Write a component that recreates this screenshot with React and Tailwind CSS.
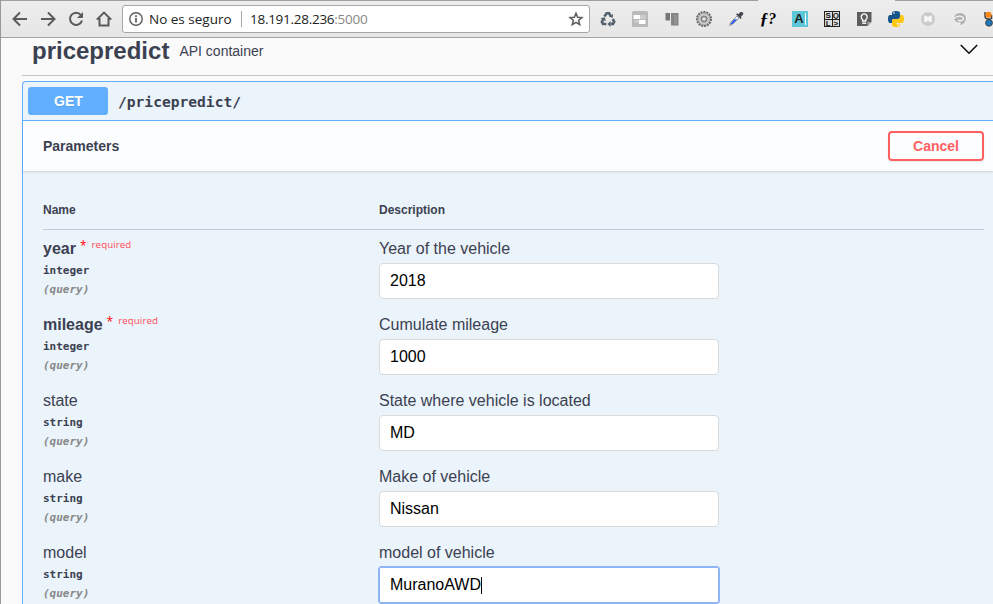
const sans = "font-['Liberation_Sans',Arial,sans-serif]";
const mono = "font-['DejaVu_Sans_Mono',monospace]";
const ui = "font-['Open_Sans','Noto_Sans',sans-serif]";

const params = [
  { name: "year", type: "integer", required: true, desc: "Year of the vehicle", value: "2018" },
  { name: "mileage", type: "integer", required: true, desc: "Cumulate mileage", value: "1000" },
  { name: "state", type: "string", desc: "State where vehicle is located", value: "MD" },
  { name: "make", type: "string", desc: "Make of vehicle", value: "Nissan" },
  { name: "model", type: "string", desc: "model of vehicle", value: "MuranoAWD", focused: true },
];

function NavIcon({ children }) {
  return (
    <svg width="16" height="16" viewBox="0 0 16 16" fill="none" stroke="#5a5a5a" strokeWidth="2" className="shrink-0">
      {children}
    </svg>
  );
}

function Ext({ children }) {
  return <svg width="16" height="16" viewBox="0 0 16 16" className="shrink-0">{children}</svg>;
}

function Toolbar() {
  return (
    <div className={`flex h-[38px] shrink-0 flex-col border-b border-[#a3a3a3] bg-linear-to-b from-[#ededed] to-[#e6e6e6] ${ui}`}>
      <div className="flex h-px shrink-0 justify-between">
        <span className="w-[757px] bg-[#a09fa1]" />
        <span className="w-[98px] bg-[#a09fa1]" />
      </div>
      <div className="flex h-9 items-center pl-[11px]">
        <div className="flex w-[110px] shrink-0 gap-3">
          <NavIcon><path d="M15 8H2M8 1.5L1.5 8L8 14.5" /></NavIcon>
          <NavIcon><path d="M1 8h13M8 1.5L14.5 8L8 14.5" /></NavIcon>
          <NavIcon>
            <path d="M12.9 4A6.1 6.1 0 1 0 14 9.5" />
            <path d="M15 1v6H9z" fill="#5a5a5a" stroke="none" />
          </NavIcon>
          <NavIcon><path d="M.8 8.6L8 1.6l7.2 7M3.5 7v7.5h9V7" /></NavIcon>
        </div>
        <div className="flex h-7 w-[468px] shrink-0 items-center rounded-[3px] border border-[#a6a6a6] bg-white pl-[6px] pr-[5px]">
          <svg width="14" height="14" viewBox="0 0 14 14" fill="none" stroke="#5a5a5a">
            <circle cx="7" cy="7" r="6.2" strokeWidth="1.4" />
            <path d="M7 6v4.5M7 3.3V5" strokeWidth="1.7" />
          </svg>
          <span className="ml-[6px] w-[86px] whitespace-nowrap text-[13.5px] leading-5 text-[#222]">No es seguro</span>
          <span className="ml-[6px] h-4 w-px bg-[#a8a8a8]" />
          <span className="ml-[8px] whitespace-nowrap text-[13.5px] leading-5 tracking-[-0.27px] text-[#222]">18.191.28.236<span className="text-[#888]">:5000</span></span>
          <svg className="ml-auto" width="16" height="16" viewBox="0 0 16 16" fill="none" stroke="#5a5a5a" strokeWidth="1.5">
            <path d="M8 2.3l1.6 4 4.3.3-3.3 2.8 1.1 4.2L8 11.3l-3.7 2.3 1.1-4.2-3.3-2.8 4.3-.3z" />
          </svg>
        </div>
        <div className="ml-[10px] flex shrink-0 gap-4">
          <Ext>
            <g fill="none" stroke="#54616d" strokeWidth="2.6">
              <path d="M4.4 5.5L6.6 2.3h2.5l1.5 2.5" />
              <path d="M12.7 8l1.5 2.7-1.2 2.2h-2.5" />
              <path d="M6.4 13H3l-1.1-2.3 1.3-2.3" />
            </g>
            <path d="M13.2 3l-.6 4-3.7-1.6zM10.5 10v6L7.5 13zM.5 7.2l4.3-.9 1 4z" fill="#54616d" />
          </Ext>
          <Ext>
            <rect width="16" height="16" rx="1.5" fill="#b9b9b9" />
            <path d="M1.5 4H8v4H1.5zM7 9h6.5v4H7z" fill="#fff" />
            <path d="M8 4h5.5v4H8zM2.500 9H7v3H2.5z" fill="#cdcdcd" />
          </Ext>
          <Ext>
            <path d="M1.5 2H6v7.5H1.5z" fill="#777" />
            <path d="M7 2h7.5v12.5H7z" fill="#858585" />
            <path d="M10 4h3v9h-3z" fill="#919191" />
          </Ext>
          <Ext>
            <circle cx="8" cy="8" r="7" fill="none" stroke="#666" strokeWidth="2" strokeDasharray="2 .93" />
            <circle cx="8" cy="8" r="6" fill="#cacaca" stroke="#888" strokeWidth=".8" />
            <circle cx="8" cy="8" r="3" fill="#aaa" stroke="#777" />
            <circle cx="8" cy="8" r="1.3" fill="#eee" />
          </Ext>
          <Ext>
            <path d="M1.5 14.5l1-3L9 5l2 2-6.3 6.3z" fill="#e8eefc" stroke="#888" strokeWidth=".8" />
            <path d="M2.4 13.6l.8-1.9L6.3 8.300h2.800l-4.600 4.600z" fill="#2855ea" />
            <path d="M8 3.3l4.7 4.6 1-1-1-1 2-2C16.5 2 14 0 12.2 1.3l-2 2-1-1z" fill="#454850" />
          </Ext>
          <span className="flex w-4 items-center justify-center whitespace-nowrap font-['Liberation_Serif',serif] text-[17px] font-bold leading-4 text-black">
            <i>ƒ</i><i className="text-[16px]">?</i>
          </span>
          <span className={`flex h-4 w-4 items-center justify-center gap-px bg-[#5bc7d9] text-[13px] font-bold leading-4 text-[#222] ${sans}`}>
            A<span className="h-3 w-px shrink-0 bg-white" />
          </span>
          <span className={`grid h-4 w-4 grid-cols-2 grid-rows-2 gap-px border border-[#222] bg-[#222] text-center text-[8px] font-bold leading-[7px] text-[#111] ${sans}`}>
            <b className="overflow-hidden bg-[#ddd]">S</b><b className="overflow-hidden bg-[#ddd]">Q</b>
            <b className="overflow-hidden bg-[#ddd]">L</b><b className="overflow-hidden bg-[#ddd]">&gt;</b>
          </span>
          <Ext>
            <path d="M1 1h14.5v10l-4 4H1z" fill="#5d5d5d" />
            <path d="M15.5 11h-4v4z" fill="#aaa" />
            <path d="M6.6 10V8.5a3 3 0 1 1 3.2 0V10z" fill="none" stroke="#fff" strokeWidth="1.3" />
            <path d="M6.2 12.2h4" stroke="#fff" strokeWidth="1.4" />
          </Ext>
          <Ext>
            <path d="M4 4V2q0-2 4-2t4 2v4q0 2-2 2H6q-2 0-2 2v2H2q-2 0-2-4t2-4h6V4z" fill="#17568c" />
            <path d="M12 4h2q2 0 2 4t-2 4H8v.8h4V14q0 2-4 2t-4-2v-4q0-2 2-2h4q2 0 2-2z" fill="#ffc817" />
            <circle cx="6" cy="2" r=".8" fill="#fff" /><circle cx="10" cy="14" r=".8" fill="#fff" />
          </Ext>
          <Ext>
            <circle cx="8" cy="8" r="7" fill="#cbcbcb" />
            <path d="M4.2 4.8H6L8 6l2-1.2h1.8v6.4H10L8 9.8l-2 1.4H4.2z" fill="#f6f6f6" />
          </Ext>
          <Ext>
            <path d="M8 1.5C12 1.500 14.500 4 14.500 7c0 4-3 7-6.500 8v-3C4 12 1.500 10 1.500 7S4 1.500 8 1.500z" fill="#b4b4b4" stroke="#f8f8f8" />
            <path d="M1.500 7.500Q6 4 9.500 5.500t1 3.500q-2 1.500-4.500 0" fill="none" stroke="#f8f8f8" strokeWidth="1.300" />
          </Ext>
          <Ext>
            <path d="M1 1v4q0 3 3.500 3H7M7.500 4v4" stroke="#444" strokeWidth="1.500" fill="none" />
            <circle cx="4.500" cy="3.800" r="3" fill="#ff8610" />
            <circle cx="5" cy="11.800" r="3.400" fill="#1c78bd" stroke="#444" />
          </Ext>
        </div>
      </div>
    </div>
  );
}

function Param({ p }) {
  return (
    <div className="flex h-[76px] shrink-0">
      <div className="w-[336px] shrink-0 pt-[9px] text-[#3b4151]">
        <div className="flex h-5">
          <span className={p.required ? "text-base font-bold leading-5" : "text-base leading-5"}>{p.name}</span>
          {p.required && (
            <span className={`ml-1 flex ${ui}`}>
              <span className="text-[12px] leading-[14px] text-[#f00]">*</span>
              <span className="ml-[5px] text-[9.7px] leading-[11px] tracking-[0.1px] text-[#ff4d55]">required</span>
            </span>
          )}
        </div>
        <div className={`pt-1 text-[11px] font-bold leading-4 ${mono}`}>{p.type}</div>
        <div className={`pt-[3px] text-[11px] font-bold italic leading-4 text-[#888] ${mono}`}>(query)</div>
      </div>
      <div className="pt-[9px]">
        <div className="text-base leading-5 text-[#3b4151]">{p.desc}</div>
        <div
          className={
            p.focused
              ? "mt-1 flex h-9 w-[340px] items-center rounded-[2px] border border-[#8db4f3] bg-white px-[10px] text-base text-black outline outline-[#8db4f3]"
              : "mt-1 flex h-9 w-[340px] items-center rounded border border-[#d9d9d9] bg-white px-[10px] text-base text-black"
          }
        >
          <span className="leading-5">{p.value}</span>
          {p.focused && <span className="h-[17px] w-px bg-black" />}
        </div>
      </div>
    </div>
  );
}

export default function App() {
  return (
    <div className={`flex h-[604px] w-[993px] flex-col overflow-hidden border-l border-[#999] bg-[#fafafa] ${sans}`}>
      <Toolbar />
      <div className="ml-[21px] flex h-[38px] shrink-0 items-start border-b border-[#c3c4c8] pl-[10px] pr-[15px] text-[#3b4151]">
        <h2 className="-mt-px text-2xl font-bold leading-7">pricepredict</h2>
        <span className="ml-[10px] mt-1 text-sm leading-[18px]">API container</span>
        <svg className="ml-auto mt-[6px]" width="18" height="11" viewBox="0 0 18 11" fill="none" stroke="#111" strokeWidth="1.6">
          <path d="M.8 1L9 9.2L17.2 1" />
        </svg>
      </div>
      <section className="ml-[21px] mt-[5px] flex min-h-0 flex-1 flex-col rounded-tl border-l border-t border-[#61affe] bg-[#ebf3fb]">
        <div className="flex h-[39px] shrink-0 items-center border-b border-[#61affe] pl-[5px]">
          <span className="flex h-7 w-20 items-center justify-center rounded-[3px] bg-[#61affe] pl-px text-sm font-bold text-white [text-shadow:0_1px_0_rgba(0,0,0,0.1)]">GET</span>
          <span className={`ml-[10px] pt-[2px] text-[14.6px] font-bold text-[#3b4151] ${mono}`}>/pricepredict/</span>
        </div>
        <div className="flex h-[50px] shrink-0 items-center justify-between bg-[#fcfdff] pl-5 pr-[9px] shadow-[0_1px_2px_rgba(0,0,0,0.15)]">
          <h4 className="text-sm font-bold text-[#3b4151]">Parameters</h4>
          <button className="h-[30px] w-24 rounded border-2 border-[#ff6060] text-sm font-bold text-[#ff6060] shadow-[0_1px_2px_rgba(0,0,0,0.1)]">Cancel</button>
        </div>
        <div className="flex min-h-0 flex-1 flex-col overflow-hidden pl-5 pr-[9px]">
          <div className="flex h-[59px] shrink-0 border-b border-[#c3cbd7] pt-[31px] text-xs font-bold leading-4 text-[#3b4151]">
            <span className="w-[336px]">Name</span>
            <span>Description</span>
          </div>
          {params.map((p) => <Param key={p.name} p={p} />)}
        </div>
      </section>
    </div>
  );
}
